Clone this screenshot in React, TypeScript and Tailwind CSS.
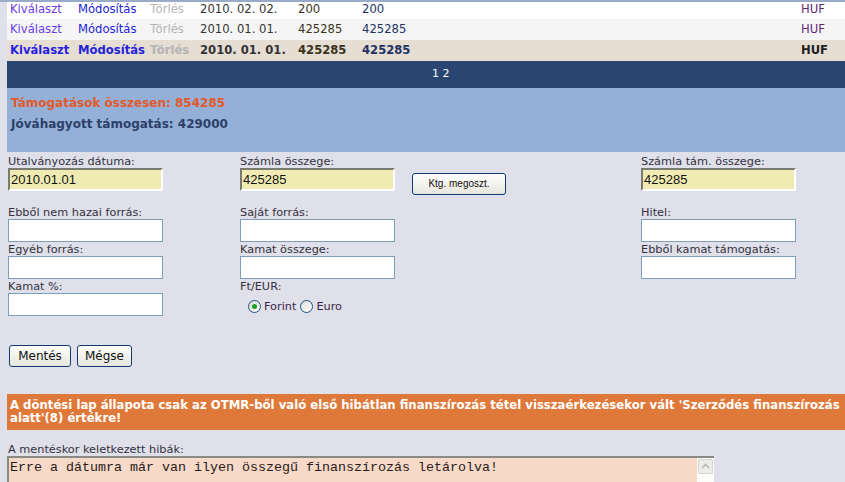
const base = "font-['DejaVu_Sans',Verdana,sans-serif]"

type RowProps = {bg: string; bold?: boolean; date: string; a: string; b: string; h: string}

function Row({bg, bold, date, a, b, h}: RowProps) {
  return (
    <div className={`flex items-center pl-[3px] text-[11.6px] ${h} ${bg} ${bold ? 'font-bold' : ''}`}>
      <span className={`w-[68px] ${bold ? 'text-[#2a1fe0]' : 'text-[#6b3be8]'}`}>Kiválaszt</span>
      <span className="w-[72px] text-[#2323d8]">Módosítás</span>
      <span className="w-[50px] text-[#b4b4b4]">Törlés</span>
      <span className="w-[98px] text-[#333]">{date}</span>
      <span className="w-[64px] text-[#3a3320]">{a}</span>
      <span className="w-[439px] text-[#223266]">{b}</span>
      <span className={bold ? 'text-[#222]' : 'text-[#5b2a74]'}>HUF</span>
    </div>
  )
}

function Field({label, value, yellow}: {label: string; value?: string; yellow?: boolean}) {
  return (
    <div>
      <div className="h-[13px] leading-[13px] text-[11.3px] text-[#35303f]">{label}</div>
      {yellow ? (
        <div className="w-[155px] h-[23px] bg-[#f0ebb2] border-2 border-t-[#7a7a70] border-l-[#7a7a70] border-r-white border-b-white pl-[1px] text-[13px] leading-[19px] text-[#111] font-['Liberation_Sans',Arial,sans-serif]">
          {value}
        </div>
      ) : (
        <div className="w-[155px] h-[23px] bg-white border border-[#7f9db9]" />
      )}
    </div>
  )
}

function Radio({checked, label}: {checked?: boolean; label: string}) {
  return (
    <span className="flex items-center gap-[3px]">
      <span className="w-[13px] h-[13px] rounded-full border border-[#1d5281] bg-gradient-to-br from-[#dcdcd7] to-white flex items-center justify-center">
        {checked && <span className="w-[5px] h-[5px] rounded-full bg-[#21a121]" />}
      </span>
      <span className="text-[11.3px] text-[#3a1f4a]">{label}</span>
    </span>
  )
}

function Btn({children, className}: {children: React.ReactNode; className: string}) {
  return (
    <button className={`h-[22px] rounded-[3px] border border-[#0f3b73] bg-gradient-to-b from-white to-[#e6e5dd] text-[#111] ${className}`}>
      {children}
    </button>
  )
}

export default function App() {
  return (
    <div className={`w-[845px] h-[482px] overflow-hidden bg-[#dfe0e9] border-t-2 border-[#9aabc9] ${base}`}>
      <div className="ml-[7px]">
        <Row bg="bg-white" h="h-[17px] pb-[2px]" date="2010. 02. 02." a="200" b="200" />
        <Row bg="bg-[#f5f5f5]" h="h-[21px]" date="2010. 01. 01." a="425285" b="425285" />
        <Row bg="bg-[#e6ddd3]" bold h="h-[21px]" date="2010. 01. 01." a="425285" b="425285" />
        <div className="h-[27px] bg-[#294672] text-white text-[11px] flex items-center pl-[425px]">1 2</div>
        <div className="h-[64px] bg-[#95b0d6] pl-[4px] pt-[5px] text-[12px] font-bold leading-[21px]">
          <div className="text-[#e25a2b]">Támogatások összesen: 854285</div>
          <div className="text-[#2c4068]">Jóváhagyott támogatás: 429000</div>
        </div>
      </div>

      <div className="pl-[8px] pt-[3px]">
        <div className="flex">
          <div className="w-[232px]"><Field label="Utalványozás dátuma:" value="2010.01.01" yellow /></div>
          <div className="w-[172px]"><Field label="Számla összege:" value="425285" yellow /></div>
          <div className="w-[229px] pt-[15px]">
            <Btn className="w-[94px] h-[20px] text-[10px] font-['Liberation_Sans',Arial,sans-serif]">Ktg. megoszt.</Btn>
          </div>
          <div><Field label="Számla tám. összege:" value="425285" yellow /></div>
        </div>

        <div className="flex mt-[11px]">
          <div className="w-[232px]"><Field label="Ebből nem hazai forrás:" /></div>
          <div className="w-[401px]"><Field label="Saját forrás:" /></div>
          <div><Field label="Hitel:" /></div>
        </div>
        <div className="flex mt-[1px]">
          <div className="w-[232px]"><Field label="Egyéb forrás:" /></div>
          <div className="w-[401px]"><Field label="Kamat összege:" /></div>
          <div><Field label="Ebből kamat támogatás:" /></div>
        </div>
        <div className="flex mt-[1px]">
          <div className="w-[232px]"><Field label="Kamat %:" /></div>
          <div>
            <div className="h-[13px] leading-[13px] text-[11.3px] text-[#35303f]">Ft/EUR:</div>
            <div className="flex gap-[4px] pl-[8px] mt-[6px]">
              <Radio checked label="Forint" />
              <Radio label="Euro" />
            </div>
          </div>
        </div>

        <div className="flex gap-[6px] mt-[29px] ml-[1px]">
          <Btn className="w-[62px] text-[12px]">Mentés</Btn>
          <Btn className="w-[55px] text-[12px]">Mégse</Btn>
        </div>
      </div>

      <div className="ml-[7px] mt-[27px] h-[36px] bg-[#df793a] text-white font-bold text-[11.7px] leading-[13px] pl-[3px] pt-[5px] overflow-hidden">
        <div className="whitespace-nowrap">A döntési lap állapota csak az OTMR-ből való első hibátlan finanszírozás tétel visszaérkezésekor vált 'Szerződés finanszírozás</div>
        <div>alatt'(8) értékre!</div>
      </div>

      <div className="ml-[8px] mt-[13px] text-[11.3px] leading-[13px] text-[#35303f]">A mentéskor keletkezett hibák:</div>
      <div className="ml-[7px] w-[707px] h-[40px] flex border-t-2 border-l-2 border-[#8a8a84]">
        <div className="flex-1 bg-[#f7d9c7] pl-[1px] pt-[2px] text-[13.33px] leading-[15px] text-[#2a1a1a] font-['Liberation_Mono','Courier_New',monospace]">
          Erre a dátumra már van ilyen összegű finanszírozás letárolva!
        </div>
        <div className="w-[17px] bg-[#fbfbf9] pt-[1px] pl-[1px]">
          <div className="w-[15px] h-[15px] rounded-[2px] border border-[#d6d6cf] bg-[#ececea] flex items-center justify-center">
            <svg width="9" height="6" viewBox="0 0 9 6"><path d="M1 5 L4.5 1.5 L8 5" stroke="#b8b8b0" strokeWidth="1.6" fill="none" /></svg>
          </div>
        </div>
      </div>
    </div>
  )
}
